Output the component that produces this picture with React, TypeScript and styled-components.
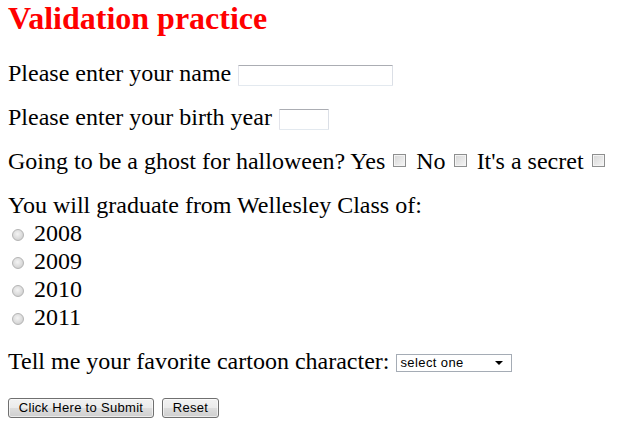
import React from "react";
import styled, { createGlobalStyle } from "styled-components";

const GlobalStyle = createGlobalStyle`
  html, body {
    margin: 0;
    padding: 0;
    background: #ffffff;
  }
  body {
    font-family: "Liberation Serif", "Times New Roman", serif;
    color: #000000;
  }
`;

const Page = styled.form`
  display: flex;
  flex-direction: column;
  padding: 2px 8px 0 8px;
  width: 617px;
  box-sizing: border-box;
`;

const Title = styled.h1`
  margin: 0 0 25px 0;
  font-family: "Liberation Serif", "Times New Roman", serif;
  font-weight: bold;
  font-size: 32px;
  line-height: 32px;
  color: #ff0000;
`;

const Row = styled.div<{ $gap?: number; $top?: number }>`
  font-size: 24px;
  line-height: 28px;
  height: 28px;
  white-space: nowrap;
  margin-top: ${(p) => p.$top ?? 0}px;
  margin-bottom: ${(p) => p.$gap ?? 16}px;
`;

const TextBox = styled.input<{ $w: number }>`
  box-sizing: border-box;
  width: ${(p) => p.$w}px;
  height: 21px;
  margin: 0 0 0 7px;
  padding: 1px 3px;
  vertical-align: middle;
  border: 1px solid;
  border-color: #abadb3 #dbdfe6 #e3e9ef #e2e3ea;
  border-radius: 1px;
  background: #ffffff;
  font-family: "Liberation Sans", Arial, sans-serif;
  font-size: 13px;
  outline: none;
`;

const Check = styled.input.attrs({ type: "checkbox" })`
  appearance: none;
  -webkit-appearance: none;
  box-sizing: border-box;
  width: 13px;
  height: 13px;
  margin: 0 10px 2px 8px;
  vertical-align: baseline;
  border: 1px solid #8e8f8f;
  background: linear-gradient(135deg, #d6d6d6 0%, #ececec 70%, #f6f6f6 100%);
  box-shadow: inset 0 0 0 1px #f4f4f4;
`;

const RadioLine = styled.label`
  display: block;
  font-size: 24px;
  line-height: 28px;
  height: 28px;
  padding-left: 4px;
`;

const Radio = styled.input.attrs({ type: "radio" })`
  appearance: none;
  -webkit-appearance: none;
  box-sizing: border-box;
  width: 12px;
  height: 12px;
  margin: 0 10px 0 0;
  vertical-align: middle;
  border-radius: 50%;
  border: 1px solid #b4b4b4;
  background: radial-gradient(circle at 45% 40%, #f4f4f4 0%, #dcdcdc 55%, #c4c4c4 100%);
`;

const SelectWrap = styled.span`
  position: relative;
  display: inline-block;
  vertical-align: middle;
  margin-left: 7px;
  width: 116px;
  height: 18px;

  &::after {
    content: "";
    position: absolute;
    right: 9px;
    top: 7px;
    border-left: 4px solid transparent;
    border-right: 4px solid transparent;
    border-top: 4px solid #000000;
    pointer-events: none;
  }
`;

const Select = styled.select`
  appearance: none;
  -webkit-appearance: none;
  box-sizing: border-box;
  display: block;
  width: 116px;
  height: 18px;
  margin: 0;
  padding: 0 0 0 3px;
  border: 1px solid #a5acb5;
  border-radius: 0;
  background: #ffffff;
  font-family: "Liberation Sans", Arial, sans-serif;
  font-size: 13px;
  letter-spacing: 0.4px;
  line-height: 16px;
  color: #000000;
  outline: none;
`;

const Buttons = styled.div`
  display: flex;
  gap: 8px;
  margin-top: 23px;
`;

const Button = styled.button<{ $w: number }>`
  box-sizing: border-box;
  width: ${(p) => p.$w}px;
  height: 20px;
  padding: 0;
  border: 1px solid #707070;
  border-radius: 3px;
  background: linear-gradient(#f2f2f2 0%, #ebebeb 50%, #dddddd 51%, #cfcfcf 100%);
  box-shadow: inset 0 0 0 1px rgba(255, 255, 255, 0.6);
  font-family: "Liberation Sans", Arial, sans-serif;
  font-size: 13px;
  letter-spacing: 0.3px;
  line-height: 18px;
  color: #000000;
`;

const years = ["2008", "2009", "2010", "2011"];

export default function App() {
  return (
    <>
      <GlobalStyle />
      <Page onSubmit={(e) => e.preventDefault()}>
        <Title>Validation practice</Title>
        <Row>
          Please enter your name
          <TextBox type="text" $w={155} />
        </Row>
        <Row>
          Please enter your birth year
          <TextBox type="text" $w={50} />
        </Row>
        <Row>
          Going to be a ghost for halloween? Yes
          <Check />
          No
          <Check />
          It's a secret
          <Check />
        </Row>
        <Row $gap={0}>You will graduate from Wellesley Class of:</Row>
        {years.map((y) => (
          <RadioLine key={y}>
            <Radio name="year" value={y} />
            {y}
          </RadioLine>
        ))}
        <Row $top={16} $gap={0}>
          Tell me your favorite cartoon character:
          <SelectWrap>
            <Select defaultValue="">
              <option value="">select one</option>
            </Select>
          </SelectWrap>
        </Row>
        <Buttons>
          <Button type="submit" $w={146}>
            Click Here to Submit
          </Button>
          <Button type="reset" $w={57}>
            Reset
          </Button>
        </Buttons>
      </Page>
    </>
  );
}
